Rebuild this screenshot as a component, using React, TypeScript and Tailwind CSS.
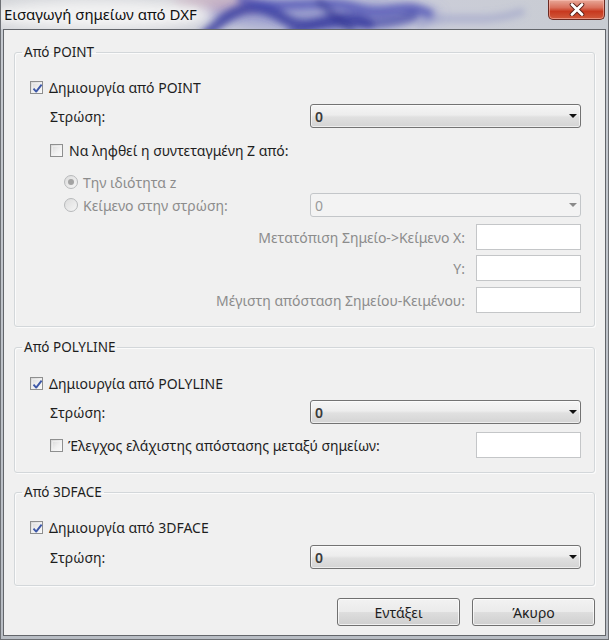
import React from "react";

function CheckBox({ checked }: { checked?: boolean }) {
  return (
    <span className="relative flex w-[13px] h-[13px] shrink-0 border border-[#8e8f8f] bg-[linear-gradient(135deg,#d6d6d6_0%,#f0f0f0_55%,#fbfbfb_100%)]">
      <span className="absolute inset-[1px] border border-[#f4f4f4]/60" />
      {checked && (
        <svg className="absolute left-[1px] top-[1px]" width="11" height="11" viewBox="0 0 11 11">
          <path d="M1.5 5.6 L4.2 8.6 L9.6 1.6" fill="none" stroke="#3d58a8" strokeWidth="1.9" strokeLinejoin="round" />
        </svg>
      )}
    </span>
  );
}

function Radio({ checked }: { checked?: boolean }) {
  return (
    <span className="relative flex w-[14px] h-[14px] shrink-0 rounded-full border border-[#b7b9bb] bg-[linear-gradient(135deg,#dcdcdc_0%,#f6f6f6_100%)] items-center justify-center">
      {checked && <span className="w-[6px] h-[6px] rounded-full bg-[#a3a3a3]" />}
    </span>
  );
}

function Combo({ disabled }: { disabled?: boolean }) {
  return disabled ? (
    <div className="w-[271px] h-[24px] flex items-center pl-[4px] pr-[3px] border border-[#c3c6c9] rounded-[3px] bg-[#f3f3f3]">
      <span className="flex-1 text-[#9a9a9a]">0</span>
      <svg width="8" height="4" viewBox="0 0 8 4">
        <path d="M0 0 H8 L4 4 Z" fill="#8a8a8a" />
      </svg>
    </div>
  ) : (
    <div className="w-[271px] h-[24px] flex items-center pl-[4px] pr-[3px] border border-[#737373] rounded-[3px] bg-[linear-gradient(to_bottom,#f5f5f5_0%,#ededed_45%,#e0e0e0_55%,#d4d4d4_100%)] shadow-[inset_0_0_0_1px_rgba(255,255,255,0.6)]">
      <span className="flex-1 font-semibold text-[#3a3a3a]">0</span>
      <svg width="8" height="4" viewBox="0 0 8 4">
        <path d="M0 0 H8 L4 4 Z" fill="#111" />
      </svg>
    </div>
  );
}

function Input() {
  return <div className="w-[105px] h-[26px] border border-[#c4c6c8] bg-white" />;
}

function Group({ title, children, className }: { title: string; children: React.ReactNode; className?: string }) {
  return (
    <fieldset className={"border border-[#d3d7da] rounded-[3px] shadow-[inset_1px_1px_0_#fbfbfb,1px_1px_0_#fbfbfb] p-0 m-0 " + (className ?? "")}>
      <legend className="ml-[7px] px-[2px] h-[16px] leading-[16px] text-[13.5px] text-[#1e1e1e]">{title}</legend>
      {children}
    </fieldset>
  );
}

function Btn({ label }: { label: string }) {
  return (
    <div className="w-[123px] h-[28px] flex items-center justify-center border border-[#707070] rounded-[3px] bg-[linear-gradient(to_bottom,#f2f2f2_0%,#ebebeb_48%,#dddddd_52%,#cfcfcf_100%)] shadow-[inset_0_0_0_1px_rgba(255,255,255,0.7)] text-[#1e1e1e]">
      {label}
    </div>
  );
}

export default function App() {
  return (
    <div className="w-[609px] h-[640px] overflow-hidden flex flex-col bg-[linear-gradient(to_bottom,#c6cad0,#b8bdc4)] font-['Noto_Sans','Open_Sans',sans-serif] text-[14px] border-l border-r border-b border-[#6d7075]">
      {/* Title bar */}
      <div className="relative h-[29px] shrink-0 flex items-start bg-[linear-gradient(to_right,#d4d6da_0%,#d0d2d8_28%,#c3c6d8_45%,#cbcdd8_70%,#c8ccd2_100%)] overflow-hidden">
        <svg className="absolute inset-0" width="609" height="29" viewBox="0 0 609 29">
          <defs>
            <filter id="bl" x="-20%" y="-80%" width="140%" height="260%">
              <feGaussianBlur stdDeviation="3.5" />
            </filter>
            <filter id="bl2" x="-20%" y="-50%" width="140%" height="200%">
              <feGaussianBlur stdDeviation="6" />
            </filter>
          </defs>
          <g filter="url(#bl2)">
            <ellipse cx="320" cy="14" rx="120" ry="14" fill="#6f72c4" opacity="0.45" />
            <ellipse cx="215" cy="2" rx="45" ry="8" fill="#c79ab0" opacity="0.5" />
          </g>
          <g filter="url(#bl)" fill="none" strokeLinecap="round">
            <path d="M205 34 C 230 10, 252 -2, 282 18 S 330 6, 368 24" stroke="#34379e" strokeWidth="11" opacity="0.8" />
            <path d="M240 -2 C 280 14, 320 -4, 355 8 S 400 -2, 428 14" stroke="#3f43b0" strokeWidth="9" opacity="0.65" />
            <path d="M290 34 C 330 16, 365 32, 412 16" stroke="#383ea0" strokeWidth="10" opacity="0.6" />
            <path d="M318 2 L 350 30" stroke="#2c2f8c" strokeWidth="7" opacity="0.55" />
            <path d="M420 24 C 450 12, 480 26, 520 12" stroke="#7c85c0" strokeWidth="8" opacity="0.35" />
          </g>
          <ellipse cx="100" cy="15" rx="112" ry="15" fill="#f4f4f4" opacity="0.9" filter="url(#bl2)" />
        </svg>
        <div className="relative pl-[3px] pt-[4px] text-[15px] leading-[20px] text-[#111] [text-shadow:0_0_6px_#fff]">
          Εισαγωγή σημείων από DXF
        </div>
        <div className="relative ml-auto mr-[3px] w-[57px] h-[20px] rounded-b-[5px] border border-t-0 border-[#6b2a22] bg-[linear-gradient(to_bottom,#e8a898_0%,#d9705c_40%,#c8391f_60%,#d05a3c_100%)] shadow-[inset_0_0_0_1px_rgba(255,200,190,0.5)] flex items-center justify-center">
          <svg width="16" height="13" viewBox="0 0 16 13">
            <path d="M3 1.5 L13 11.5 M13 1.5 L3 11.5" stroke="#5a2018" strokeWidth="4.6" strokeLinecap="round" />
            <path d="M3 1.5 L13 11.5 M13 1.5 L3 11.5" stroke="#ffffff" strokeWidth="2.8" strokeLinecap="round" />
          </svg>
        </div>
      </div>

      {/* Client area */}
      <div className="ml-[2px] w-[603px] h-[607px] shrink-0 border border-[#63666b] bg-[#f0f0f0] flex flex-col px-[10px] pt-[14px] pb-[8px] text-[#1e1e1e]">
        {/* Group 1 */}
        <Group title="Από POINT" className="pb-[13px]">
          <div className="flex items-center h-[16px] mt-[19px] pl-[15px] gap-[6px]">
            <CheckBox checked />
            <span>Δημιουργία από POINT</span>
          </div>
          <div className="flex items-center justify-between h-[24px] mt-[9px] pl-[35px] pr-[13px]">
            <span>Στρώση:</span>
            <Combo />
          </div>
          <div className="flex items-center h-[16px] mt-[14px] pl-[35px] gap-[6px]">
            <CheckBox />
            <span>Να ληφθεί η συντεταγμένη Z από:</span>
          </div>
          <div className="flex items-center h-[16px] mt-[16px] pl-[49px] gap-[5px] text-[#8c8c8c]">
            <Radio checked />
            <span>Την ιδιότητα z</span>
          </div>
          <div className="flex items-center justify-between h-[24px] mt-[3px] pl-[49px] pr-[13px] text-[#8c8c8c]">
            <span className="flex items-center gap-[5px]">
              <Radio />
              <span>Κείμενο στην στρώση:</span>
            </span>
            <Combo disabled />
          </div>
          <div className="flex items-center justify-end h-[26px] mt-[7px] pr-[13px] gap-[11px] text-[#8c8c8c]">
            <span>Μετατόπιση Σημείο-&gt;Κείμενο X:</span>
            <Input />
          </div>
          <div className="flex items-center justify-end h-[26px] mt-[5px] pr-[13px] gap-[11px] text-[#8c8c8c]">
            <span>Y:</span>
            <Input />
          </div>
          <div className="flex items-center justify-end h-[26px] mt-[6px] pr-[13px] gap-[11px] text-[#8c8c8c]">
            <span>Μέγιστη απόσταση Σημείου-Κειμένου:</span>
            <Input />
          </div>
        </Group>

        {/* Group 2 */}
        <Group title="Από POLYLINE" className="mt-[12px] pb-[14px]">
          <div className="flex items-center h-[16px] mt-[20px] pl-[15px] gap-[6px]">
            <CheckBox checked />
            <span>Δημιουργία από POLYLINE</span>
          </div>
          <div className="flex items-center justify-between h-[24px] mt-[9px] pl-[35px] pr-[13px]">
            <span>Στρώση:</span>
            <Combo />
          </div>
          <div className="flex items-center justify-between h-[26px] mt-[8px] pl-[35px] pr-[13px]">
            <span className="flex items-center gap-[5px]">
              <CheckBox />
              <span>Έλεγχος ελάχιστης απόστασης μεταξύ σημείων:</span>
            </span>
            <Input />
          </div>
        </Group>

        {/* Group 3 */}
        <Group title="Από 3DFACE" className="mt-[11px] pb-[16px]">
          <div className="flex items-center h-[16px] mt-[19px] pl-[15px] gap-[6px]">
            <CheckBox checked />
            <span>Δημιουργία από 3DFACE</span>
          </div>
          <div className="flex items-center justify-between h-[24px] mt-[10px] pl-[35px] pr-[13px]">
            <span>Στρώση:</span>
            <Combo />
          </div>
        </Group>

        <div className="flex justify-end gap-[12px] mt-[12px]">
          <Btn label="Εντάξει" />
          <Btn label="Άκυρο" />
        </div>
      </div>
    </div>
  );
}
